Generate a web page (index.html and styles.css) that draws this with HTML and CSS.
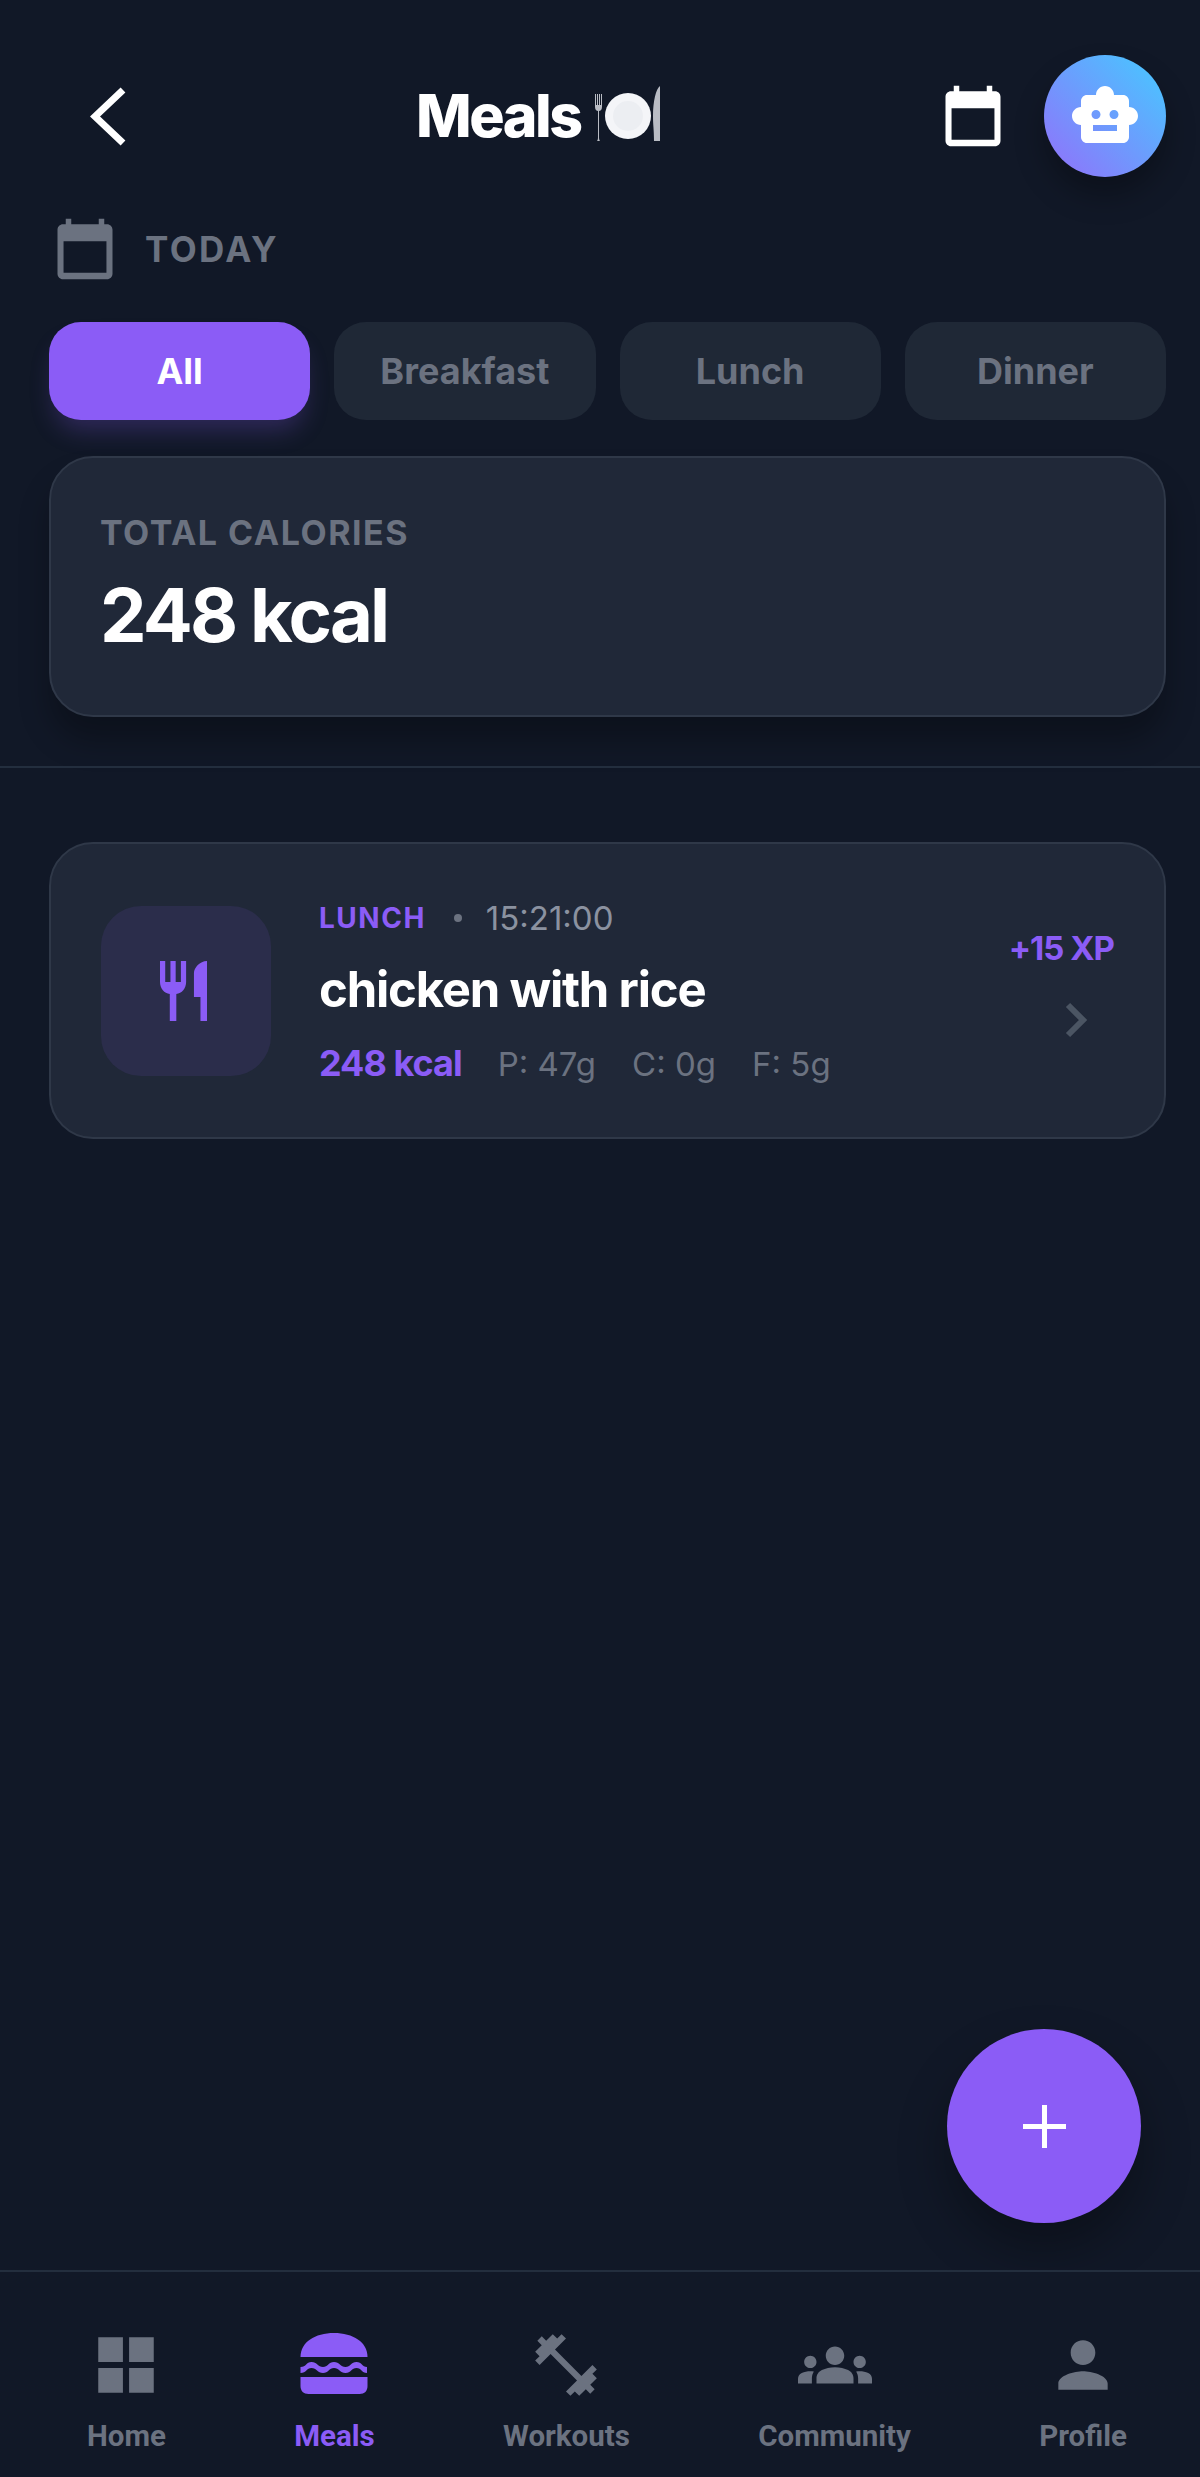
FILE: index.html
```html
<!DOCTYPE html>
<html lang="en">

<head>
  <meta charset="UTF-8">
  <title>Meals</title>
  <link rel="stylesheet" href="styles.css">
</head>

<body>
  <div class="app">
    <header class="topbar">
      <svg class="back" viewBox="0 0 37 59"><path d="M33 3 5 29.500 33 56" /></svg>
      <h1 class="title">Meals
        <svg class="plate" viewBox="0 0 68 56">
          <path class="cutlery" d="M1 8h1v11h1V8h1v11h1V8h1v11h1V8h1v13c0 3-2 4-3 4v27c0 2 1 3 1 3H3s1-1 1-3V25c-1 0-3-1-3-4z" />
          <circle class="dish" cx="34" cy="30" r="23" />
          <circle class="dish-in" cx="34" cy="30" r="15" />
          <path class="cutlery" d="M60 55c0-12-1-15-1-25C59 15 62 3 66 0v55z" />
        </svg>
      </h1>
      <svg class="icon-cal" viewBox="0 0 24 24"><path d="M20 3h-1V1h-2v2H7V1H5v2H4c-1.100 0-2 .900-2 2v16c0 1.100.900 2 2 2h16c1.100 0 2-.900 2-2V5c0-1.100-.900-2-2-2zM19.800 20.600H4.200V9.200h15.600z" /></svg>
      <div class="robot">
        <svg viewBox="0 0 24 24"><path d="M20 9V7c0-1.100-.900-2-2-2h-3c0-1.660-1.340-3-3-3S9 3.340 9 5H6c-1.100 0-2 .900-2 2v2c-1.660 0-3 1.340-3 3s1.340 3 3 3v4c0 1.100.900 2 2 2h12c1.100 0 2-.900 2-2v-4c1.660 0 3-1.340 3-3s-1.340-3-3-3zM7.500 11.500c0-.830.670-1.500 1.500-1.500s1.500.670 1.500 1.500S9.830 13 9 13s-1.500-.670-1.500-1.500zM16 17H8v-2h8v2zm-1-4c-.830 0-1.500-.670-1.500-1.500S14.170 10 15 10s1.500.670 1.500 1.500S15.830 13 15 13z" fill-rule="evenodd" /></svg>
      </div>
    </header>

    <div class="date-row">
      <svg viewBox="0 0 24 24"><path d="M20 3h-1V1h-2v2H7V1H5v2H4c-1.100 0-2 .900-2 2v16c0 1.100.900 2 2 2h16c1.100 0 2-.900 2-2V5c0-1.100-.900-2-2-2zM19.800 20.600H4.200V9.200h15.600z" /></svg>
      <span>TODAY</span>
    </div>

    <div class="tabs">
      <div class="tab active">All</div>
      <div class="tab">Breakfast</div>
      <div class="tab">Lunch</div>
      <div class="tab">Dinner</div>
    </div>

    <section class="total">
      <div class="total-label">TOTAL CALORIES</div>
      <div class="total-value">248 kcal</div>
    </section>

    <div class="divider"></div>

    <main class="list">
      <article class="meal">
        <div class="meal-icon">
          <svg viewBox="3 2 18 20" preserveAspectRatio="none"><path d="M11 9H9V2H7v7H5V2H3v7c0 2.120 1.660 3.840 3.750 3.970V22h2.500v-9.030C11.340 12.840 13 11.120 13 9V2h-2v7zm5-3v8h2.500v8H21V2c-2.760 0-5 2.240-5 4z" /></svg>
        </div>
        <div class="meal-body">
          <div class="meal-meta">
            <span class="meal-type">LUNCH</span>
            <span class="dot"></span>
            <span class="meal-time">15:21:00</span>
          </div>
          <div class="meal-name">chicken with rice</div>
          <div class="meal-macros">
            <span class="meal-kcal">248 kcal</span>
            <span>P: 47g</span>
            <span>C: 0g</span>
            <span>F: 5g</span>
          </div>
        </div>
        <div class="meal-side">
          <div class="xp">+15 XP</div>
          <svg class="chevron" viewBox="0 0 24 36"><path d="M4 3l15 15L4 33" /></svg>
        </div>
      </article>
    </main>

    <div class="fab">
      <svg viewBox="0 0 43 43"><path d="M19 0h5v19h19v5H24v19h-5V24H0v-5h19z" /></svg>
    </div>

    <nav class="nav">
      <div class="nav-item">
        <svg viewBox="0 0 24 24"><path d="M3 3h8v8H3zM13 3h8v8h-8zM3 13h8v8H3zM13 13h8v8h-8z" /></svg>
        <span>Home</span>
      </div>
      <div class="nav-item on">
        <svg viewBox="0 0 74 74">
          <path d="M3.500 29C3.500 14 18 5 37 5s33.500 9 33.500 24z" />
          <path d="M3.500 45c6 0 6-5 11-5s6 5 11.500 5 6-5 11-5 6 5 11.500 5 6-5 11-5 5 5 10.500 5v-6c-5 0-5-5-10.500-5s-6 5-11 5-6-5-11.500-5-6 5-11 5-6-5-11.500-5-5 5-11 5z" />
          <path d="M3.500 49h67v9c0 5-3 8-8 8h-51c-5 0-8-3-8-8z" />
        </svg>
        <span>Meals</span>
      </div>
      <div class="nav-item">
        <svg viewBox="0 0 24 24"><path d="M20.570 14.860L22 13.430 20.570 12 17 15.570 8.430 7 12 3.430 10.570 2 9.140 3.430 7.710 2 5.570 4.140 4.140 2.710 2.710 4.140l1.430 1.430L2 7.710l1.430 1.430L2 10.570 3.430 12 7 8.430 15.570 17 12 20.570 13.430 22l1.430-1.430L16.290 22l2.140-2.140 1.430 1.430 1.430-1.430-1.430-1.430L22 16.290z" /></svg>
        <span>Workouts</span>
      </div>
      <div class="nav-item">
        <svg viewBox="0 0 24 24"><path d="M12 12.750c1.630 0 3.070.390 4.240.900 1.080.480 1.760 1.560 1.760 2.730V18H6v-1.610c0-1.180.680-2.260 1.760-2.730 1.170-.520 2.610-.910 4.240-.910zM4 13c1.100 0 2-.900 2-2s-.900-2-2-2-2 .900-2 2 .900 2 2 2zm1.130 1.100c-.370-.060-.740-.100-1.130-.100-.990 0-1.930.210-2.780.580C.480 14.900 0 15.620 0 16.430V18h4.500v-1.610c0-.830.230-1.610.630-2.290zM20 13c1.100 0 2-.900 2-2s-.900-2-2-2-2 .900-2 2 .900 2 2 2zm4 3.430c0-.810-.480-1.530-1.220-1.850-.850-.370-1.790-.580-2.780-.580-.390 0-.760.040-1.130.100.400.680.630 1.460.630 2.290V18H24v-1.570zM12 6c1.660 0 3 1.340 3 3s-1.340 3-3 3-3-1.340-3-3 1.340-3 3-3z" /></svg>
        <span>Community</span>
      </div>
      <div class="nav-item">
        <svg viewBox="0 0 24 24"><path d="M12 12c2.210 0 4-1.790 4-4s-1.790-4-4-4-4 1.790-4 4 1.790 4 4 4zm0 2c-2.670 0-8 1.340-8 4v2h16v-2c0-2.660-5.330-4-8-4z" /></svg>
        <span>Profile</span>
      </div>
    </nav>
  </div>
</body>

</html>
```
FILE: styles.css
```css
body {
  --bg: #111827;
  --card: #1f2836;
  --line: #2f3848;
  --purple: #8b5cf6;
  --muted: #6b7280;
  margin: 0;
  background: var(--bg);
  font-family: "Inter", "Liberation Sans", sans-serif;
}

.app {
  position: relative;
  display: flex;
  flex-direction: column;
  height: 2477px;
  overflow: hidden;
}

.topbar {
  display: flex;
  align-items: center;
  padding: 55px 34px 0 90px;
}

.back {
  width: 37px;
  height: 59px;
  fill: none;
  stroke: #fff;
  stroke-width: 7;
}

.title {
  flex: 1;
  margin: 0 0 2px;
  padding-left: 11px;
  color: #fff;
  font-size: 59px;
  font-weight: 800;
  letter-spacing: -2.500px;
  text-align: center;
}

.plate {
  width: 68px;
  height: 56px;
  margin-left: 3px;
  vertical-align: -5px;
}

.cutlery {
  fill: #b9bcc4;
}

.dish {
  fill: #f4f5f8;
}

.dish-in {
  fill: #eceef2;
}

.icon-cal {
  width: 66px;
  height: 66px;
  margin-right: 38px;
  fill: #fff;
}

.robot {
  display: flex;
  align-items: center;
  justify-content: center;
  width: 122px;
  height: 122px;
  border-radius: 50%;
  background: linear-gradient(225deg, #50bdff 15%, #8b78fb 90%);
  box-shadow: 0 18px 30px rgba(0, 0, 0, .3);
}

.robot svg {
  width: 72px;
  height: 72px;
  fill: #fff;
}

.date-row {
  display: flex;
  align-items: center;
  gap: 32px;
  margin-top: 39px;
  padding-left: 52px;
  color: var(--muted);
  font-size: 35px;
  font-weight: 700;
  letter-spacing: 2.400px;
}

.date-row svg {
  width: 66px;
  height: 66px;
  margin-right: -5px;
  fill: var(--muted);
}

.tabs {
  display: flex;
  gap: 24px;
  margin: 40px 34px 0 49px;
}

.tab {
  flex: 1;
  height: 98px;
  border-radius: 32px;
  background: var(--card);
  color: var(--muted);
  font-size: 36px;
  font-weight: 700;
  line-height: 98px;
  text-align: center;
}

.tab.active {
  background: var(--purple);
  color: #fff;
  box-shadow: 0 16px 24px -6px rgba(139, 92, 246, .25);
}

.total {
  height: 261px;
  box-sizing: border-box;
  margin: 36px 34px 0 49px;
  padding: 54px 49px 0;
  border: 2px solid var(--line);
  border-radius: 44px;
  background: #202838;
  box-shadow: 0 24px 30px rgba(0, 0, 0, .28);
}

.total-label {
  color: var(--muted);
  font-size: 34px;
  font-weight: 700;
  letter-spacing: 1.500px;
}

.total-value {
  margin-top: 17px;
  color: #fff;
  font-size: 74px;
  font-weight: 700;
  letter-spacing: -2.800px;
}

.divider {
  height: 2px;
  margin-top: 49px;
  background: #232e3e;
}

.list {
  flex: 1;
  padding: 74px 34px 0 49px;
}

.meal {
  display: flex;
  align-items: center;
  height: 297px;
  box-sizing: border-box;
  padding: 0 50px;
  border: 2px solid var(--line);
  border-radius: 44px;
  background: #202838;
}

.meal-icon {
  display: flex;
  align-items: center;
  justify-content: center;
  width: 170px;
  height: 170px;
  border-radius: 40px;
  background: #2b2d4b;
}

.meal-icon svg {
  width: 47px;
  height: 60px;
  margin-right: 5px;
  fill: var(--purple);
}

.meal-body {
  flex: 1;
  margin-left: 48px;
  padding-top: 2px;
}

.meal-meta {
  display: flex;
  align-items: center;
  color: #8b92a0;
  font-size: 33px;
}

.meal-type {
  color: var(--purple);
  font-size: 28px;
  font-weight: 700;
  letter-spacing: 1.500px;
}

.dot {
  width: 8px;
  height: 8px;
  margin: 0 24px 0 28px;
  border-radius: 50%;
  background: var(--muted);
}

.meal-name {
  margin-top: 22px;
  color: #fff;
  font-size: 49px;
  font-weight: 700;
  letter-spacing: -1.200px;
}

.meal-macros {
  display: flex;
  align-items: baseline;
  gap: 36px;
  margin-top: 22px;
  color: var(--muted);
  font-size: 33px;
}

.meal-kcal {
  color: var(--purple);
  font-size: 36px;
  font-weight: 700;
  letter-spacing: -1px;
}

.meal-side {
  display: flex;
  flex-direction: column;
  align-items: flex-end;
  gap: 34px;
  padding-bottom: 16px;
}

.xp {
  color: var(--purple);
  font-size: 33px;
  font-weight: 700;
  letter-spacing: -1px;
}

.chevron {
  width: 24px;
  height: 36px;
  margin-right: 26px;
  fill: none;
  stroke: #4b5563;
  stroke-width: 6;
}

.fab {
  position: absolute;
  left: 947px;
  top: 2029px;
  display: flex;
  align-items: center;
  justify-content: center;
  width: 194px;
  height: 194px;
  border-radius: 50%;
  background: var(--purple);
  box-shadow: 0 26px 50px rgba(0, 0, 0, .32);
}

.fab svg {
  width: 43px;
  height: 43px;
  fill: #fff;
}

.nav {
  position: relative;
  display: flex;
  justify-content: space-between;
  height: 207px;
  box-sizing: border-box;
  padding: 56px 73px 0 87px;
  border-top: 2px solid #232e3e;
  background: var(--bg);
}

.nav-item {
  display: flex;
  flex-direction: column;
  align-items: center;
  gap: 17px;
  color: var(--muted);
  font-family: "Roboto", "Liberation Sans", sans-serif;
  font-size: 29.500px;
  font-weight: 700;
}

.nav-item svg {
  width: 74px;
  height: 74px;
  fill: var(--muted);
}

.nav-item.on {
  color: var(--purple);
}

.nav-item.on svg {
  fill: var(--purple);
}
```
